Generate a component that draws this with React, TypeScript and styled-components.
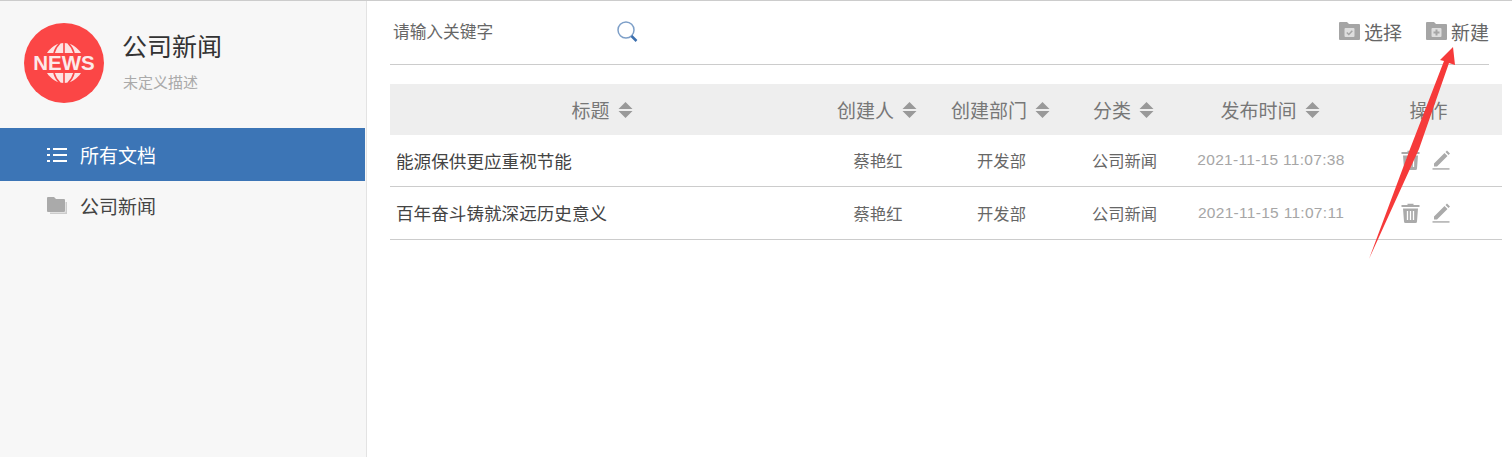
import styled, { createGlobalStyle } from "styled-components";
import { FC } from "react";

const GlobalStyle = createGlobalStyle`
  html, body {
    margin: 0;
    padding: 0;
    background: #fff;
    font-family: "Noto Sans CJK SC", "Liberation Sans", sans-serif;
  }
`;

const Page = styled.div`
  position: relative;
  display: flex;
  width: 1512px;
  height: 457px;
  box-sizing: border-box;
  border-top: 1px solid #ccc;
  overflow: hidden;
`;

const Sidebar = styled.aside`
  width: 367px;
  flex-shrink: 0;
  box-sizing: border-box;
  background: #f7f7f7;
  border-right: 1px solid #e3e3e3;
`;

const Brand = styled.div`
  display: flex;
  align-items: flex-start;
  gap: 19px;
  height: 127px;
  box-sizing: border-box;
  padding: 22px 0 0 24px;
`;

const BrandText = styled.div`
  display: flex;
  flex-direction: column;
  padding-top: 4px;
`;

const BrandTitle = styled.div`
  margin-left: -1px;
  font-size: 25px;
  line-height: 36px;
  color: #333;
`;

const BrandDesc = styled.div`
  margin-top: 8px;
  font-size: 15px;
  line-height: 22px;
  color: #aaa;
`;

const MenuItem = styled.div<{ $active?: boolean }>`
  display: flex;
  align-items: center;
  gap: 13px;
  height: ${(p) => (p.$active ? "53px" : "49px")};
  margin-right: 1px;
  padding-left: 47px;
  font-size: 19px;
  color: ${(p) => (p.$active ? "#fff" : "#444")};
  background: ${(p) => (p.$active ? "#3c75b6" : "transparent")};
`;

const Main = styled.main`
  flex: 1;
  padding-left: 23px;
  padding-right: 10px;
`;

const Toolbar = styled.div`
  display: flex;
  align-items: center;
  justify-content: space-between;
  width: 1099px;
  height: 64px;
  box-sizing: border-box;
  border-bottom: 1px solid #ccc;
  padding: 0 0 3px 3px;
`;

const Search = styled.div`
  display: flex;
  align-items: center;
`;

const SearchInput = styled.input`
  width: 224px;
  border: 0;
  outline: 0;
  padding: 0;
  background: transparent;
  font-family: inherit;
  font-size: 16.7px;
  color: #666;

  &::placeholder {
    color: #666;
    opacity: 1;
  }
`;

const Actions = styled.div`
  display: flex;
  align-items: center;
  gap: 24px;
`;

const ActionButton = styled.div`
  display: flex;
  align-items: center;
  gap: 4px;
  font-size: 19px;
  color: #666;
`;

const Table = styled.table`
  width: 1112px;
  margin-top: 19px;
  border-collapse: collapse;
  table-layout: fixed;
`;

const HeadRow = styled.tr`
  height: 51px;
  background: #eee;
`;

const Th = styled.th`
  padding: 0;
  font-size: 19px;
  font-weight: 400;
  color: #777;
  text-align: center;
`;

const HeadInner = styled.span`
  display: inline-flex;
  align-items: center;
  gap: 8px;
  margin-left: -1px;
`;

const Row = styled.tr<{ $height: number }>`
  height: ${(p) => p.$height}px;
  border-bottom: 1px solid #ccc;
`;

const Td = styled.td`
  padding: 0 0 0 1px;
  font-size: 16.3px;
  color: #666;
  text-align: center;
`;

const TitleCell = styled(Td)`
  padding-left: 6px;
  font-size: 17.6px;
  color: #444;
  text-align: left;
`;

const DateCell = styled(Td)`
  font-family: "Liberation Sans", sans-serif;
  font-size: 15.5px;
  letter-spacing: 0.3px;
  color: #a6a6a6;
`;

const OpIcons = styled.div`
  display: flex;
  justify-content: center;
  align-items: center;
  gap: 12px;
  padding-right: 8px;
`;

const Arrow = styled.svg`
  position: absolute;
  left: 1360px;
  top: 39px;
`;

const SortIcon: FC = () => (
  <svg width="15" height="18" viewBox="0 0 15 18">
    <path d="M7.500 1L14.500 8H.5zM7.500 17L.5 10h14z" fill="#999" />
  </svg>
);

const NewsLogo: FC = () => (
  <svg width="80" height="80" viewBox="0 0 80 80">
    <circle cx="40" cy="40" r="40" fill="#fb4646" />
    <path d="M23 30C27 24 33 20 40 20S53 24 57 30z" fill="#fde3e3" />
    <path
      d="M40 20V30M36 20C33 23 31 26 30 30M44 20C47 23 49 26 50 30"
      fill="none"
      stroke="#fb4646"
      strokeWidth="1.600"
    />
    <path d="M23 50C27 56 33 60 40 60S53 56 57 50z" fill="#fde3e3" />
    <path
      d="M40 60V50M36 60C33 57 31 54 30 50M44 60C47 57 49 54 50 50"
      fill="none"
      stroke="#fb4646"
      strokeWidth="1.600"
    />
    <text
      x="40"
      y="47"
      textAnchor="middle"
      fontFamily="Liberation Sans"
      fontWeight="700"
      fontSize="20.500"
      fill="#fde9e9"
    >
      NEWS
    </text>
  </svg>
);

const ListIcon: FC = () => (
  <svg width="20" height="16" viewBox="0 0 20 16">
    <path
      d="M0 1h3v2H0zM6 1h14v2H6zM0 7h3v2H0zM6 7h14v2H6zM0 13h3v2H0zM6 13h14v2H6z"
      fill="#fff"
    />
  </svg>
);

const FoldersIcon: FC = () => (
  <svg width="20" height="18" viewBox="0 0 20 18">
    <path d="M3 17h17V5h-1.500v10.500H3z" fill="#ccc" />
    <path
      d="M1 0h6l2 2h8a1 1 0 0 1 1 1v11a1 1 0 0 1-1 1H1a1 1 0 0 1-1-1V1a1 1 0 0 1 1-1z"
      fill="#aaa"
    />
  </svg>
);

const FolderCheckIcon: FC = () => (
  <svg width="21" height="18" viewBox="0 0 21 18">
    <path
      d="M1 0h7l2 2h10a1 1 0 0 1 1 1v14a1 1 0 0 1-1 1H1a1 1 0 0 1-1-1V1a1 1 0 0 1 1-1z"
      fill="#a5a5a5"
    />
    <rect x="5.500" y="6" width="10" height="9" rx="1" fill="#dedede" />
    <path d="M7.800 10.500l2 2 3.500-3.800" fill="none" stroke="#a5a5a5" strokeWidth="1.500" />
  </svg>
);

const FolderPlusIcon: FC = () => (
  <svg width="21" height="18" viewBox="0 0 21 18">
    <path
      d="M1 0h7l2 2h10a1 1 0 0 1 1 1v14a1 1 0 0 1-1 1H1a1 1 0 0 1-1-1V1a1 1 0 0 1 1-1z"
      fill="#a5a5a5"
    />
    <rect x="5.500" y="6" width="10" height="9" rx="1" fill="#dedede" />
    <path d="M7.500 10.500h6M10.500 7.500v6" stroke="#a5a5a5" strokeWidth="2" />
  </svg>
);

const SearchIcon: FC = () => (
  <svg width="21" height="21" viewBox="0 0 21 21">
    <circle cx="9" cy="9" r="8" fill="none" stroke="#7d9fc8" strokeWidth="1.500" />
    <path d="M14.500 15l5 5" stroke="#3c6fae" strokeWidth="2.500" />
  </svg>
);

const TrashIcon: FC = () => (
  <svg width="19" height="20" viewBox="0 0 19 20">
    <path d="M6.500 2V.8h6V2H18.500v2H.5V2z" fill="#aaa" />
    <path
      d="M2 5.500h15l-1 13a1.500 1.500 0 0 1-1.500 1.500h-10A1.500 1.500 0 0 1 3 18.500z"
      fill="#aaa"
    />
    <path d="M6.500 8v9M9.500 8v9M12.500 8v9" stroke="#fff" strokeWidth="1.300" />
  </svg>
);

const PencilIcon: FC = () => (
  <svg width="18" height="20" viewBox="0 0 18 20">
    <path d="M2 13.500L12.500 3l3 3L5 16.500H2zM13.500 2l1.500-1.500 3 3L16.500 5z" fill="#aaa" />
    <rect x="0.500" y="18" width="17" height="1.800" fill="#bbb" />
  </svg>
);

const columns = [
  { label: "标题", width: 425 },
  { label: "创建人", width: 125 },
  { label: "创建部门", width: 122 },
  { label: "分类", width: 124 },
  { label: "发布时间", width: 169 },
];

const docs = [
  {
    title: "能源保供更应重视节能",
    author: "蔡艳红",
    dept: "开发部",
    category: "公司新闻",
    date: "2021-11-15 11:07:38",
    height: 51,
  },
  {
    title: "百年奋斗铸就深远历史意义",
    author: "蔡艳红",
    dept: "开发部",
    category: "公司新闻",
    date: "2021-11-15 11:07:11",
    height: 53,
  },
];

const App: FC = () => {
  return (
    <>
      <GlobalStyle />
      <Page>
        <Sidebar>
          <Brand>
            <NewsLogo />
            <BrandText>
              <BrandTitle>公司新闻</BrandTitle>
              <BrandDesc>未定义描述</BrandDesc>
            </BrandText>
          </Brand>
          <MenuItem $active>
            <ListIcon />
            所有文档
          </MenuItem>
          <MenuItem>
            <FoldersIcon />
            公司新闻
          </MenuItem>
        </Sidebar>
        <Main>
          <Toolbar>
            <Search>
              <SearchInput placeholder="请输入关键字" />
              <SearchIcon />
            </Search>
            <Actions>
              <ActionButton>
                <FolderCheckIcon />
                选择
              </ActionButton>
              <ActionButton>
                <FolderPlusIcon />
                新建
              </ActionButton>
            </Actions>
          </Toolbar>
          <Table>
            <colgroup>
              {columns.map((c) => (
                <col key={c.label} width={c.width} />
              ))}
              <col width={147} />
            </colgroup>
            <thead>
              <HeadRow>
                {columns.map((c) => (
                  <Th key={c.label}>
                    <HeadInner>
                      {c.label}
                      <SortIcon />
                    </HeadInner>
                  </Th>
                ))}
                <Th>操作</Th>
              </HeadRow>
            </thead>
            <tbody>
              {docs.map((d) => (
                <Row key={d.date} $height={d.height}>
                  <TitleCell>{d.title}</TitleCell>
                  <Td>{d.author}</Td>
                  <Td>{d.dept}</Td>
                  <Td>{d.category}</Td>
                  <DateCell>{d.date}</DateCell>
                  <Td>
                    <OpIcons>
                      <TrashIcon />
                      <PencilIcon />
                    </OpIcons>
                  </Td>
                </Row>
              ))}
            </tbody>
          </Table>
        </Main>
        <Arrow width="100" height="225" viewBox="0 0 100 225">
          <path d="M93 7L95 25 89 23 59 109 9 219 50 109 84 21 80 20z" fill="#f63a3a" />
        </Arrow>
      </Page>
    </>
  );
};

export default App;
